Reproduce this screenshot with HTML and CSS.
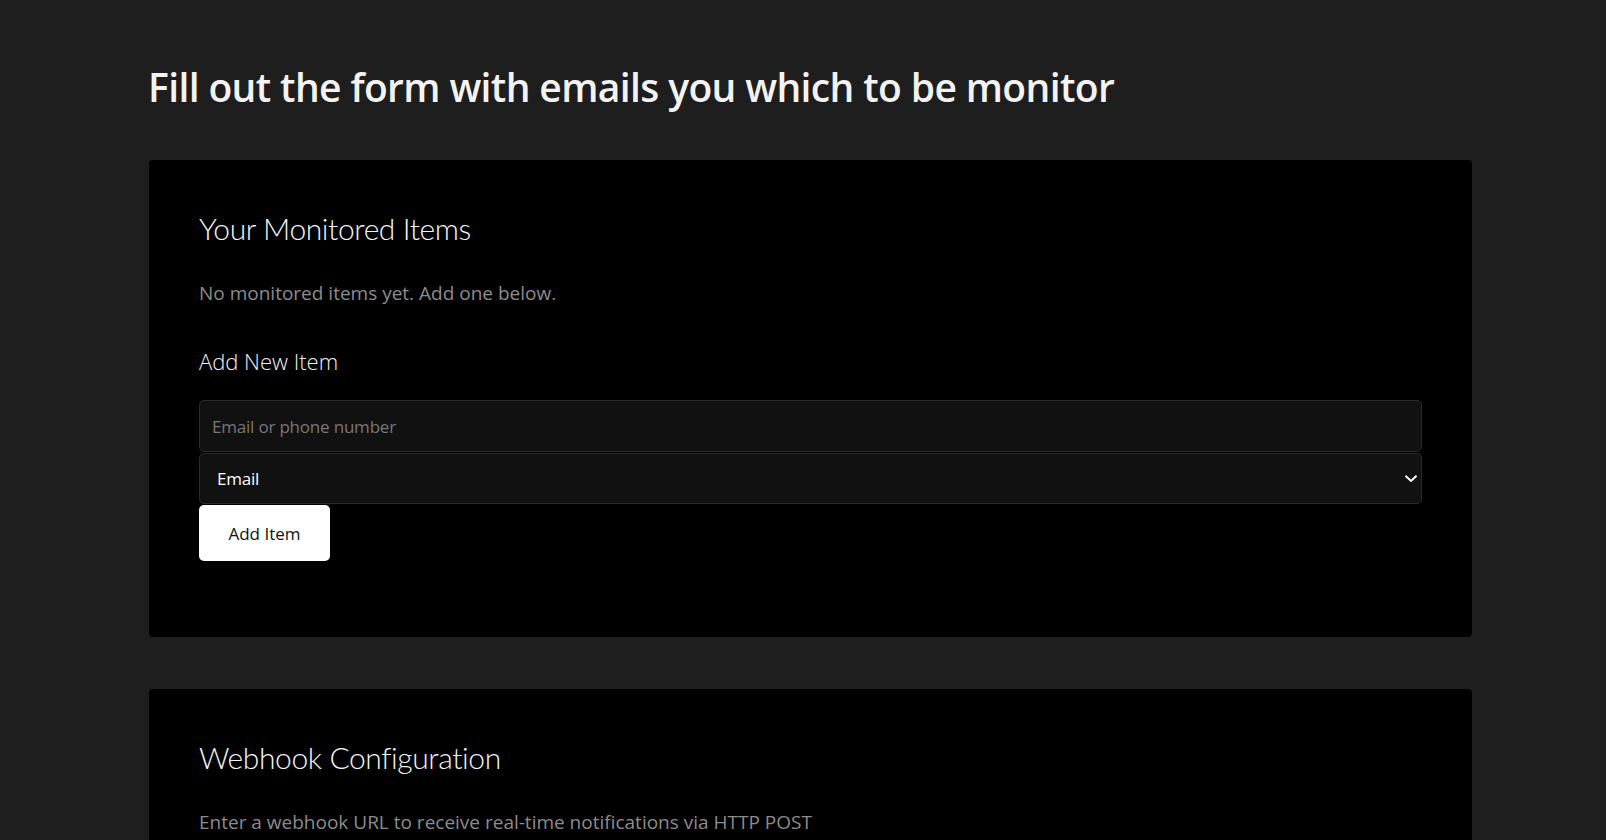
FILE: index.html
```html
<!DOCTYPE html>
<html lang="en">
<head>
<meta charset="utf-8">
<title>Monitor</title>
<link rel="stylesheet" href="styles.css">
</head>
<body>
<main class="page">
  <h1 class="title">Fill out the form with emails you which to be monitor</h1>

  <section class="card">
    <h2 class="card-title">Your Monitored Items</h2>
    <p class="muted">No monitored items yet. Add one below.</p>
    <h3 class="sub-title">Add New Item</h3>
    <form class="form">
      <input class="field" type="text" placeholder="Email or phone number">
      <div class="select-wrap">
        <select class="field select">
          <option>Email</option>
          <option>Phone</option>
        </select>
        <svg class="chevron" width="12" height="8" viewBox="0 0 12 8" aria-hidden="true">
          <path d="M1.2 1.5 L6 6 L10.8 1.5" fill="none" stroke="#ffffff" stroke-width="2" stroke-linecap="square"/>
        </svg>
      </div>
      <button class="btn" type="button">Add Item</button>
    </form>
  </section>

  <section class="card">
    <h2 class="card-title">Webhook Configuration</h2>
    <p class="muted">Enter a webhook URL to receive real-time notifications via HTTP POST</p>
  </section>
</main>
</body>
</html>
```

FILE: styles.css
```css
html, body {
  margin: 0;
  padding: 0;
  background: #1e1e1e;
}

body {
  font-family: "Open Sans", "Noto Sans", "Liberation Sans", sans-serif;
  color: #f2f2f2;
}

.page {
  width: 1323px;
  margin: 0 0 0 149px;
  padding-top: 63px;
  display: flex;
  flex-direction: column;
  gap: 52px;
}

.title {
  margin: 0 0 -2px -1px;
  font-size: 39px;
  line-height: 47px;
  font-weight: 600;
  letter-spacing: -0.62px;
  color: #f3f3f3;
}

.card {
  background: #000;
  border-radius: 4px;
  padding: 48px 50px 49px 50px;
  display: flex;
  flex-direction: column;
}

.card-title {
  margin: 0;
  font-family: "Lato", "Open Sans", sans-serif;
  font-size: 30px;
  line-height: 40px;
  font-weight: 300;
  letter-spacing: -0.4px;
  color: #f5f5f5;
}

.muted {
  margin: 31px 0 0 0;
  font-size: 19px;
  line-height: 28px;
  color: #8c8c8c;
}

.sub-title {
  margin: 39px 0 0 0;
  font-size: 22px;
  line-height: 30px;
  font-weight: 300;
  color: #f0f0f0;
}

.form {
  margin: 24px 0 27px 0;
  display: flex;
  flex-direction: column;
  align-items: flex-start;
  gap: 1px;
}

.field {
  box-sizing: border-box;
  width: 100%;
  height: 52px;
  background: #111111;
  border: 1px solid #2a2a2a;
  border-radius: 5px;
  color: #ffffff;
  font-family: inherit;
  font-size: 17px;
  letter-spacing: -0.2px;
  padding: 0 12px;
  outline: none;
}

.field::placeholder {
  color: #777777;
}

.select-wrap {
  position: relative;
  width: 100%;
}

.select {
  height: 51px;
  appearance: none;
  -webkit-appearance: none;
  font-size: 17px;
  font-weight: 500;
  letter-spacing: -0.2px;
  padding: 0 17px;
  display: block;
}

.chevron {
  position: absolute;
  right: 5px;
  top: 22px;
  pointer-events: none;
}

.btn {
  box-sizing: border-box;
  width: 131px;
  height: 56px;
  background: #ffffff;
  color: #111111;
  border: none;
  border-radius: 5px;
  font-family: inherit;
  font-size: 17px;
  cursor: pointer;
}
```
